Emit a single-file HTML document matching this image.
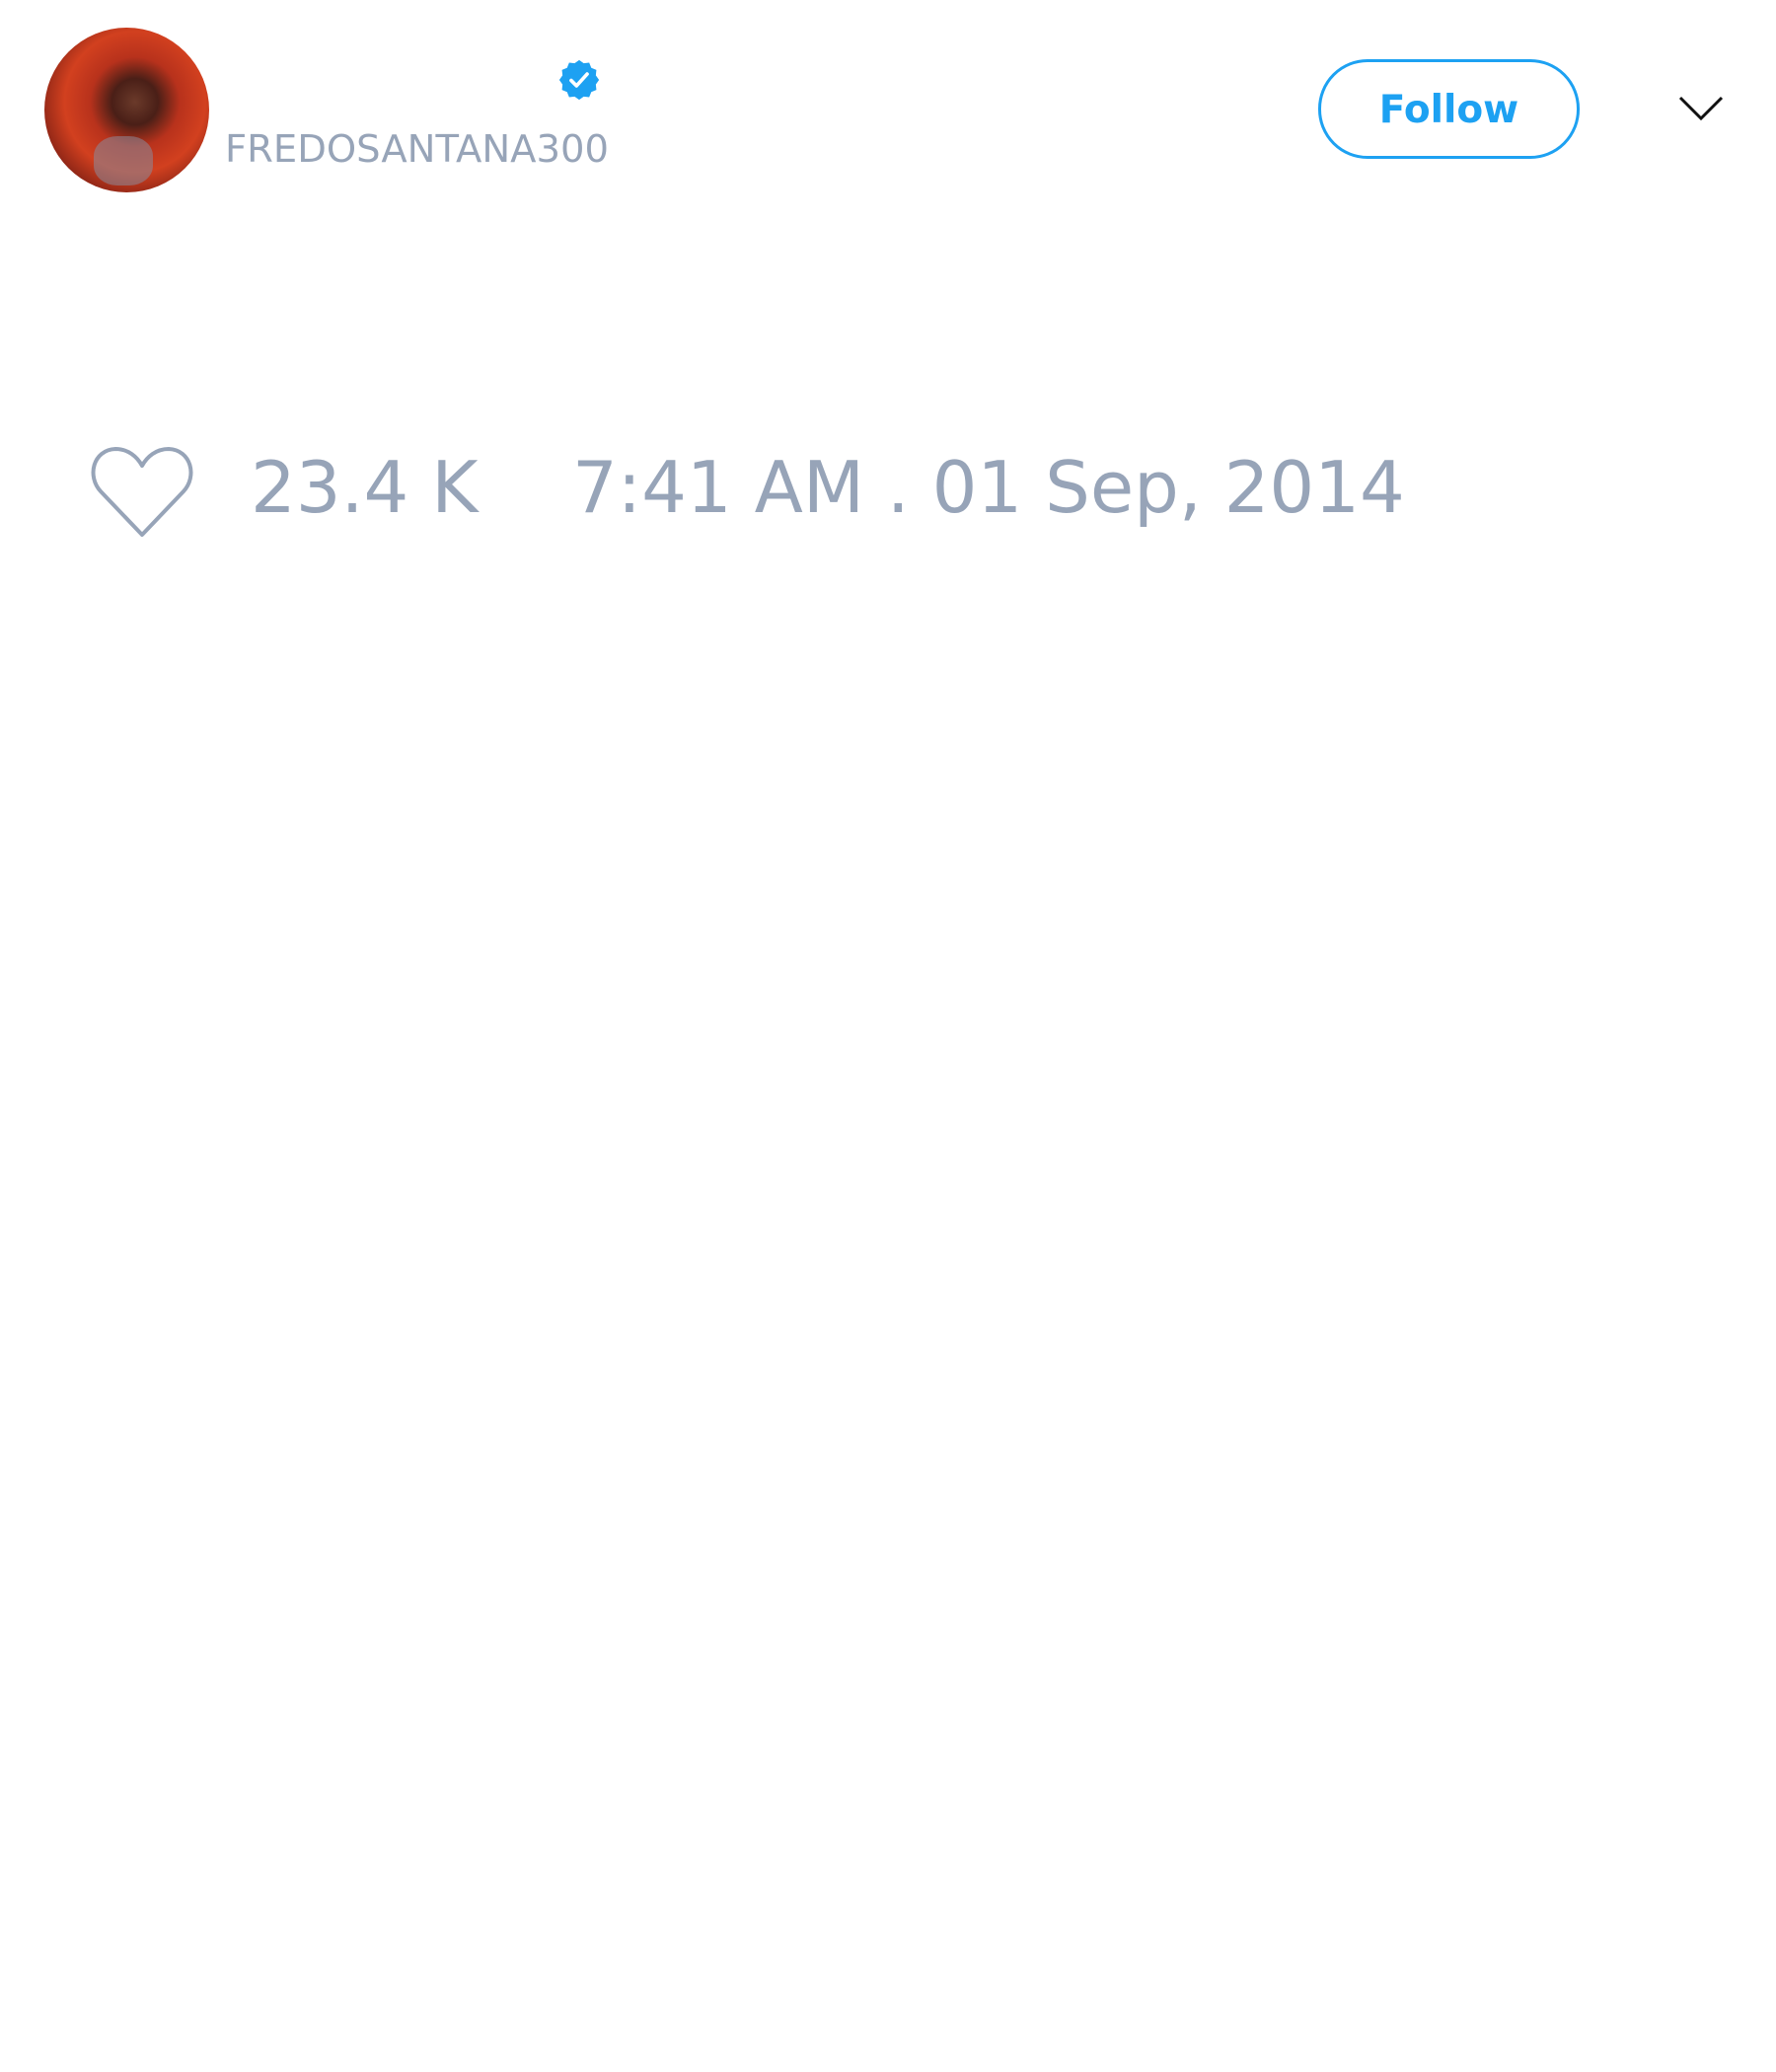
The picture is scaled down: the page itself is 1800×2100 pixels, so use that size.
<!DOCTYPE html>
<html><head><meta charset="utf-8"><style>
html,body{margin:0;padding:0;background:#fff;width:1800px;height:2100px;overflow:hidden;font-family:"DejaVu Sans","Liberation Sans",sans-serif}
.av{position:absolute;left:45px;top:28px;width:167px;height:167px;border-radius:50%;background:radial-gradient(circle at 55% 45%,#6b3a2a 0,#4a1f17 18%,#b8321c 35%,#d2401f 55%,#7a1e14 80%,#3a1510 100%);overflow:hidden}
.av:after{content:"";position:absolute;left:50px;top:110px;width:60px;height:50px;border-radius:40%;background:#8a8a9a;opacity:.55}
.h{position:absolute;left:228px;top:128px;font-size:38.5px;color:#97a4b8;white-space:nowrap;line-height:48px}
.btn{position:absolute;left:1336px;top:60px;width:259px;height:95px;border:3px solid #1da1f2;border-radius:50px;color:#1da1f2;font-weight:bold;font-size:39px;line-height:97px;text-align:center}
.t{position:absolute;top:447px;font-size:72px;color:#97a4b8;white-space:nowrap;line-height:95px}
</style></head><body>
<div class="av"></div>
<svg style="position:absolute;left:564px;top:58px" width="46" height="46" viewBox="0 0 24 24"><path fill="#1da1f2" d="M12 1.5l2.4 1.7 2.9-.3 1.1 2.7 2.7 1.1-.3 2.9L22.5 12l-1.7 2.4.3 2.9-2.7 1.1-1.1 2.7-2.9-.3L12 22.5l-2.4-1.7-2.9.3-1.1-2.7-2.7-1.1.3-2.9L1.5 12l1.7-2.4-.3-2.9 2.7-1.1 1.1-2.7 2.9.3z"/><path d="M7.8 12.3l2.8 2.8 5.6-6.2" fill="none" stroke="#fff" stroke-width="1.9" stroke-linecap="round" stroke-linejoin="round"/></svg>
<div class="h">FREDOSANTANA300</div>
<div class="btn">Follow</div>
<svg style="position:absolute;left:1700px;top:95px" width="48" height="32" viewBox="0 0 48 32"><path d="M3 4l21 21L45 4" fill="none" stroke="#111" stroke-width="3"/></svg>
<svg style="position:absolute;left:90px;top:450px" width="108" height="96" viewBox="0 0 108 96"><path d="M54 92L12 48C-2 33 4 6 27 5c13 0 22 8 27 17c5-9 14-17 27-17c23 1 29 28 15 43z" fill="none" stroke="#97a4b8" stroke-width="4" stroke-linejoin="round"/></svg>
<div class="t" style="left:254px">23.4 K</div>
<div class="t" style="left:580px">7:41 AM . 01 Sep, 2014</div>
</body></html>
